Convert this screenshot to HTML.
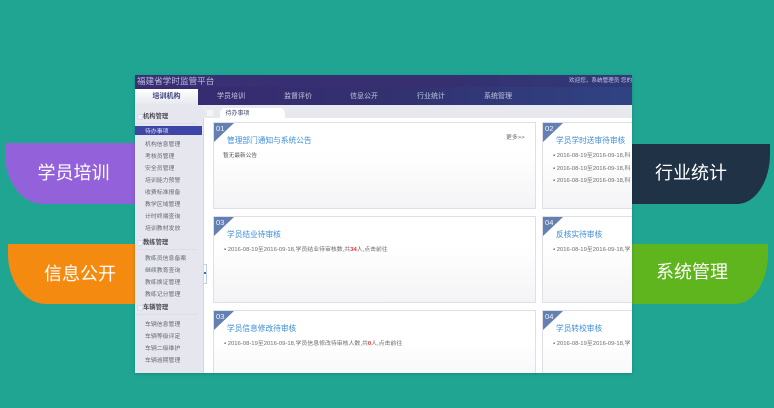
<!DOCTYPE html>
<html><head><meta charset="utf-8">
<style>
html,body{margin:0;padding:0}
body{width:774px;height:408px;overflow:hidden;position:relative;background:#20a593;font-family:"Liberation Sans","Noto Sans CJK SC",sans-serif}
.b{position:absolute;color:#fff;font-size:18px;text-align:center;white-space:nowrap}
.b span{display:block}
#win{position:absolute;left:135px;top:75px;width:497px;height:298px;background:#fff;overflow:hidden;box-shadow:0 1px 3px rgba(0,60,50,.25)}
#in{position:absolute;inset:0;filter:blur(.38px)}
.a{position:absolute;white-space:nowrap}
.top{left:0;top:0;width:497px;height:12px;background:linear-gradient(90deg,#3a2f75,#372f70 60%,#303a78)}
.nav{left:0;top:12px;width:497px;height:18px;background:linear-gradient(90deg,#372a72,#33306f 50%,#2f4384)}
.nt{top:13px;height:18px;line-height:18px;font-size:7px;color:#c5c6dc}
.side{left:0;top:30px;width:68.5px;height:268px;background:#e6e7ee;border-right:1px solid #d3d5e2;box-sizing:border-box}
.bar{left:68px;top:30px;width:429px;height:13px;background:#e8e9ee}
.h{left:8px;font-size:6.3px;font-weight:bold;color:#4a4a55;line-height:10px;margin-top:.7px}
.h:before{content:"";position:absolute;left:-6px;top:2px;width:4px;height:4px;border:1px solid #d8dae6;border-radius:1px;background:#eef}
.u{left:2px;width:60px;height:1px;background:#dcdde6}
.l{left:10px;font-size:5.9px;color:#666a76;line-height:10px;margin-top:1.5px}
.card{position:absolute;width:323px;height:87px;box-sizing:border-box;border:1.5px solid #dedfe9;background:linear-gradient(#fff 35%,#f4f4f6)}
.card:before{content:"";position:absolute;left:0;top:0;width:0;height:0;border-top:19px solid #6480b3;border-right:20px solid transparent}
.n{position:absolute;left:2px;top:1px;color:#f0f3fa;font-size:7.6px;line-height:9px}
.t{position:absolute;left:13px;top:12px;color:#3a8bd8;font-size:7.7px;line-height:12px;white-space:nowrap}
.r{position:absolute;left:10px;font-size:5.9px;color:#6b6b6b;line-height:9px;white-space:nowrap;margin-top:1px}
.r i{font-style:normal;color:#f03030;font-weight:bold}
</style></head><body>
<div class="b" style="left:5px;top:143px;width:140px;height:61px;background:#9361d9;border-radius:0 0 0 38px/0 0 0 50px"><span style="width:137px;line-height:60px">学员培训</span></div>
<div class="b" style="left:8px;top:243.5px;width:140px;height:60.5px;background:#f48a10;border-radius:0 0 0 38px/0 0 0 50px"><span style="width:144px;line-height:60px">信息公开</span></div>
<div class="b" style="left:620px;top:144px;width:149.5px;height:60px;background:#203246;border-radius:0 0 33px 0/0 0 50px 0"><span style="width:142px;line-height:59px">行业统计</span></div>
<div class="b" style="left:620px;top:244px;width:148px;height:60px;background:#5fb51d;border-radius:0 0 33px 0/0 0 50px 0"><span style="width:144px;line-height:57px">系统管理</span></div>
<div id="win"><div id="in">
<div class="a top"></div>
<div class="a" style="left:2px;top:0;font-size:8.6px;line-height:12px;color:#bcbcd8">福建省学时监管平台</div>
<div class="a" style="left:434px;top:0;font-size:5.6px;line-height:12px;color:#c6c8de">欢迎您，系统管理员 您的</div>
<div class="a nav"></div>
<div class="a" style="left:0;top:14px;width:63px;height:16px;background:linear-gradient(#fff,#e7e8ef)"></div>
<div class="a" style="left:0;top:14px;width:63px;text-align:center;font-size:7px;font-weight:bold;line-height:16px;color:#3c3f80">培训机构</div>
<div class="a nt" style="left:82px">学员培训</div>
<div class="a nt" style="left:149px">监督评价</div>
<div class="a nt" style="left:215px">信息公开</div>
<div class="a nt" style="left:282px">行业统计</div>
<div class="a nt" style="left:349px">系统管理</div>
<div class="a side"></div>
<div class="a bar"></div>
<div class="a" style="left:72px;top:35px;width:6px;height:6px;background:#f5f5f8"></div>
<div class="a" style="left:85px;top:33px;width:65px;height:10px;background:#fff;border-radius:5px 5px 0 0"></div>
<div class="a" style="left:90.5px;top:34px;font-size:6px;line-height:10px;color:#3d4a70">待办事项</div>
<div class="a h" style="top:36px">机构管理</div>
<div class="a u" style="top:48px"></div>
<div class="a" style="left:0;top:50.5px;width:67px;height:9.5px;background:#3d45a6"></div>
<div class="a l" style="top:50px;color:#dfe1f4">待办事项</div>
<div class="a l" style="top:63px">机构信息管理</div>
<div class="a l" style="top:75px">考核员管理</div>
<div class="a l" style="top:87px">安全员管理</div>
<div class="a l" style="top:99px">培训能力预警</div>
<div class="a l" style="top:111px">收费标准报备</div>
<div class="a l" style="top:123px">教学区域管理</div>
<div class="a l" style="top:135px">计时终端查询</div>
<div class="a l" style="top:147px">培训教材发放</div>
<div class="a h" style="top:162px">教练管理</div>
<div class="a u" style="top:174px"></div>
<div class="a l" style="top:177px">教练员信息备案</div>
<div class="a l" style="top:189px">继续教育查询</div>
<div class="a l" style="top:201px">教练换证管理</div>
<div class="a l" style="top:213px">教练记分管理</div>
<div class="a h" style="top:227px">车辆管理</div>
<div class="a u" style="top:239px"></div>
<div class="a l" style="top:243px">车辆信息管理</div>
<div class="a l" style="top:255px">车辆等级评定</div>
<div class="a l" style="top:267px">车辆二级维护</div>
<div class="a l" style="top:279px">车辆逾期管理</div>
<div class="a" style="left:68.5px;top:189px;width:2.5px;height:18px;background:#fff;border:1px solid #bcd0ee;border-left:0"></div>
<div class="a" style="left:69px;top:197px;width:2px;height:2px;background:#4a6aa8"></div>

<div class="card" style="left:78px;top:47px"><span class="n">01</span><span class="t">管理部门通知与系统公告</span><span class="r" style="left:9px;top:28px;color:#555;font-size:5.7px">暂无最新公告</span><span class="r" style="left:292px;top:10px">更多&gt;&gt;</span></div>
<div class="card" style="left:78px;top:141px"><span class="n">03</span><span class="t">学员结业待审核</span><span class="r" style="top:28px">▪ 2016-08-19至2016-09-18,学员结业待审核数,共<i>34</i>人,点击前往</span></div>
<div class="card" style="left:78px;top:235px"><span class="n">03</span><span class="t">学员信息修改待审核</span><span class="r" style="top:28px">▪ 2016-08-19至2016-09-18,学员信息修改待审核人数,共<i>0</i>人,点击前往</span></div>
<div class="card" style="left:407px;top:47px"><span class="n">02</span><span class="t">学员学时送审待审核</span><span class="r" style="top:28px">▪ 2016-08-19至2016-09-18,科</span><span class="r" style="top:41px">▪ 2016-08-19至2016-09-18,科</span><span class="r" style="top:53px">▪ 2016-08-19至2016-09-18,科</span></div>
<div class="card" style="left:407px;top:141px"><span class="n">04</span><span class="t">反核实待审核</span><span class="r" style="top:28px">▪ 2016-08-19至2016-09-18,学</span></div>
<div class="card" style="left:407px;top:235px"><span class="n">04</span><span class="t">学员转校审核</span><span class="r" style="top:28px">▪ 2016-08-19至2016-09-18,学</span></div>
</div></div>
</body></html>
